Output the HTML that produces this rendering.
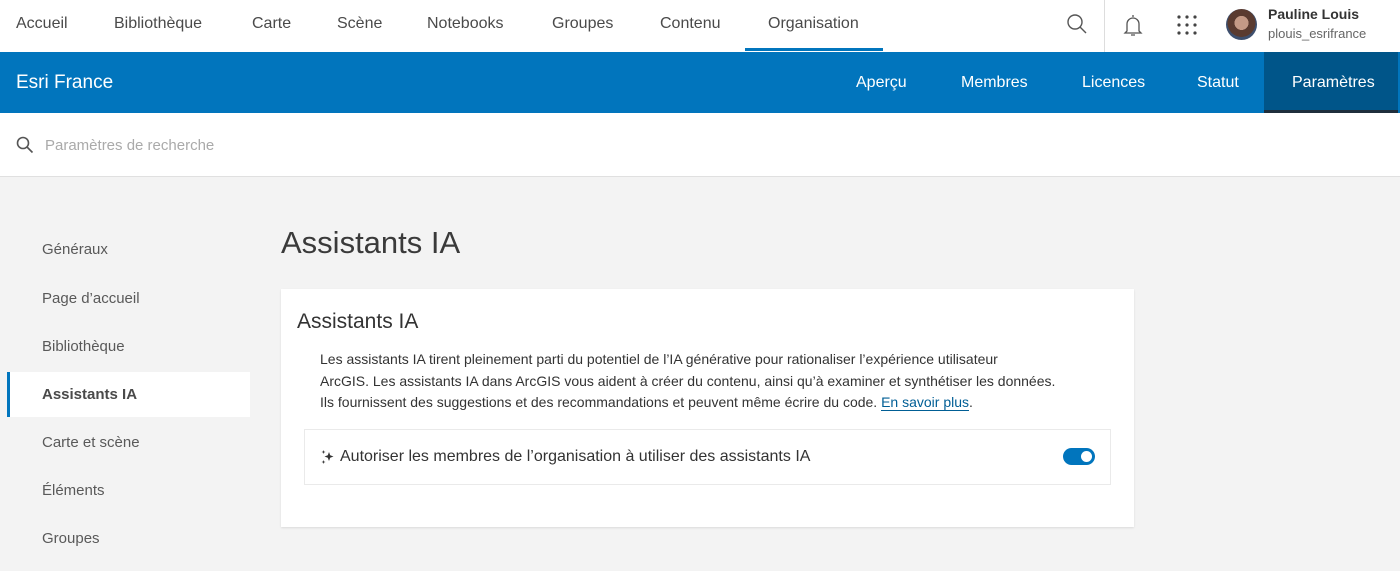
<!DOCTYPE html>
<html><head><meta charset="utf-8"><style>
*{margin:0;padding:0;box-sizing:border-box}
body{width:1400px;height:571px;overflow:hidden;background:#f3f3f3;font-family:"Liberation Sans",sans-serif;color:#4a4a4a;position:relative}
.top{position:absolute;left:0;top:0;width:1400px;height:52px;background:#fff}
.top a{position:absolute;top:15px;font-size:16px;color:#4a4a4a}
.blue{position:absolute;left:0;top:52px;width:1400px;height:61px;background:#0175bd}
.blue span{position:absolute;color:#fff;font-size:16px;top:22px}
.search{position:absolute;left:0;top:113px;width:1400px;height:64px;background:#fff;border-bottom:1px solid #e0e0e0}
.side a{position:absolute;left:42px;font-size:15px;color:#595959}
</style></head><body>
<div class="top">
<a style="left:16px">Accueil</a><a style="left:114px">Bibliothèque</a><a style="left:252px">Carte</a><a style="left:337px">Scène</a><a style="left:427px">Notebooks</a><a style="left:552px">Groupes</a><a style="left:660px">Contenu</a><a style="left:768px">Organisation</a>
<div style="position:absolute;left:745px;top:48px;width:138px;height:3px;background:#0175bd"></div>
<svg style="position:absolute;left:1066px;top:13px" width="22" height="22" viewBox="0 0 22 22" fill="none" stroke="#555" stroke-width="1.4"><circle cx="9" cy="9" r="7"/><path d="M14 14l6 6"/></svg>
<div style="position:absolute;left:1104px;top:0;width:1px;height:52px;background:#ddd"></div>
<svg style="position:absolute;left:1122px;top:12px" width="22" height="26" viewBox="0 0 22 26" fill="none" stroke="#555" stroke-width="1.3"><path d="M11 3v2M5 19V12a6 6 0 0 1 12 0v7l2 2H3z M9 23h4"/></svg>
<svg style="position:absolute;left:1176px;top:14px" width="22" height="22" fill="#444"><circle cx="3" cy="3" r="1.6"/><circle cx="11" cy="3" r="1.6"/><circle cx="19" cy="3" r="1.6"/><circle cx="3" cy="11" r="1.6"/><circle cx="11" cy="11" r="1.6"/><circle cx="19" cy="11" r="1.6"/><circle cx="3" cy="19" r="1.6"/><circle cx="11" cy="19" r="1.6"/><circle cx="19" cy="19" r="1.6"/></svg>
<div style="position:absolute;left:1226px;top:9px;width:31px;height:31px;border-radius:50%;background:radial-gradient(circle at 50% 45%,#c49a86 0 30%,#5a3b30 31% 60%,#3d4f6e 61%)"></div>
<div style="position:absolute;left:1268px;top:6px;font-size:14px;font-weight:bold;color:#333">Pauline Louis</div>
<div style="position:absolute;left:1268px;top:26px;font-size:13px;color:#666">plouis_esrifrance</div>
</div>
<div class="blue">
<span style="left:16px;top:20px;font-size:19px">Esri France</span>
<span style="left:856px">Aperçu</span><span style="left:961px">Membres</span><span style="left:1082px">Licences</span><span style="left:1197px">Statut</span>
<div style="position:absolute;left:1264px;top:0;width:134px;height:61px;background:#005589;border-bottom:3px solid #1f2e3c"><span style="left:28px">Paramètres</span></div>
</div>
<div class="search">
<svg style="position:absolute;left:16px;top:23px" width="18" height="18" fill="none" stroke="#555" stroke-width="1.6"><circle cx="7" cy="7" r="5.5"/><path d="M11 11l5.5 5.5"/></svg>
<div style="position:absolute;left:45px;top:24px;font-size:15px;color:#aaa">Paramètres de recherche</div>
</div>
<div class="side">
<a style="top:241px">Généraux</a><a style="top:290px">Page d’accueil</a><a style="top:338px">Bibliothèque</a>
<div style="position:absolute;left:7px;top:372px;width:243px;height:45px;background:#fff;border-left:3px solid #0175bd"></div>
<a style="top:386px;font-weight:bold;color:#4a4a4a">Assistants IA</a>
<a style="top:434px">Carte et scène</a><a style="top:482px">Éléments</a><a style="top:530px">Groupes</a>
</div>
<div style="position:absolute;left:281px;top:225px;font-size:31px;color:#3a3a3a">Assistants IA</div>
<div style="position:absolute;left:281px;top:289px;width:853px;height:238px;background:#fff;box-shadow:0 1px 2px rgba(0,0,0,.1)">
<div style="position:absolute;left:16px;top:21px;font-size:21px;color:#333">Assistants IA</div>
<div style="position:absolute;left:39px;top:60px;width:800px;white-space:nowrap;font-size:14px;line-height:21.5px;color:#333">Les assistants IA tirent pleinement parti du potentiel de l’IA générative pour rationaliser l’expérience utilisateur<br>ArcGIS. Les assistants IA dans ArcGIS vous aident à créer du contenu, ainsi qu’à examiner et synthétiser les données.<br>Ils fournissent des suggestions et des recommandations et peuvent même écrire du code. <span style="color:#005e95;border-bottom:1px solid #005e95">En savoir plus</span>.</div>
<div style="position:absolute;left:23px;top:140px;width:807px;height:56px;border:1px solid #eaeaea">
<svg style="position:absolute;left:15px;top:19px" width="16" height="16" viewBox="0 0 16 16" fill="#333"><path d="M9 3l1.2 3.3L13.5 7.5l-3.3 1.2L9 12l-1.2-3.3L4.5 7.5l3.3-1.2z"/><path d="M3.5 1l.5 1.5L5.5 3 4 3.5 3.5 5 3 3.5 1.5 3 3 2.5z"/><path d="M3.5 11l.5 1.5 1.5.5-1.5.5-.5 1.5-.5-1.5-1.5-.5 1.5-.5z"/></svg>
<div style="position:absolute;left:35px;top:18px;font-size:16px;color:#333">Autoriser les membres de l’organisation à utiliser des assistants IA</div>
<div style="position:absolute;left:758px;top:18px;width:32px;height:17px;border-radius:9px;background:#0175bd"><div style="position:absolute;right:3px;top:3px;width:11px;height:11px;border-radius:50%;background:#fff"></div></div>
</div>
</div>
</body></html>
